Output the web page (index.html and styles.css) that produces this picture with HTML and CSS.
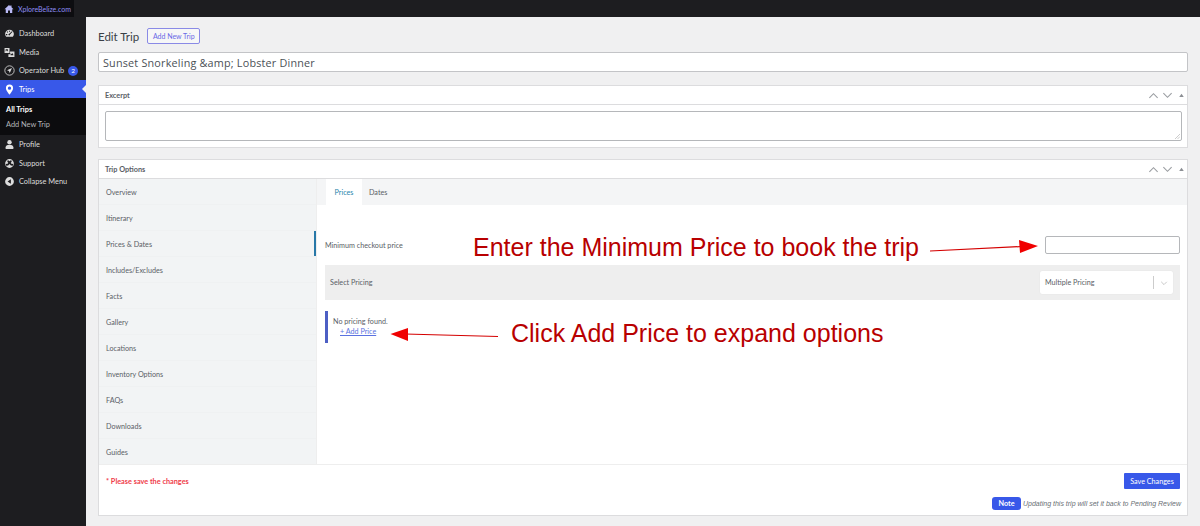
FILE: index.html
```html
<!DOCTYPE html>
<html lang="en">
<head>
<meta charset="utf-8">
<title>Edit Trip</title>
<link rel="stylesheet" href="styles.css">
</head>
<body>
<header class="adminbar">
  <div class="site">
    <svg class="site-icon" viewBox="0 0 20 20"><path d="M10 2 1 10.500h2.500V18H8v-5h4v5h4.500v-7.500H19l-4-3.800V3h-2.500v1.400z"/></svg>
    <span>XploreBelize.com</span>
  </div>
</header>
<div class="layout">
  <nav class="sidebar">
    <ul class="menu">
      <li class="item"><svg class="icon" viewBox="0 0 20 20"><path fill-rule="evenodd" d="M10 3a8 8 0 0 0-8 8c0 2 .7 3.800 2 5h12a8 8 0 0 0 2-5 8 8 0 0 0-8-8zM9 5h2v2H9zM5 7l1.500-1 1 1.500L6 8.500zm9.500-1 1 1L11 12a1.500 1.500 0 1 1-1.500-1.500zM3.500 11h2.500v2H3.500z"/></svg>Dashboard</li>
      <li class="item"><svg class="icon" viewBox="0 0 20 20"><path fill-rule="evenodd" d="M1 2h9v9H1zm2 2v4l2-2 2 2V4zM11 8h8v10H8v-5h3zm1 3v4h5v-1l-2-3-1.500 2z"/></svg>Media</li>
      <li class="item"><svg class="icon" viewBox="0 0 20 20"><circle cx="10" cy="10" r="8.500" fill="none" stroke="currentColor" stroke-width="1.500"/><path d="M14.500 5.500 5.500 9.500l3.500 1.500 1.500 3.500z"/></svg>Operator Hub<span class="badge">2</span></li>
      <li class="item current"><svg class="icon" viewBox="0 0 20 20"><path fill-rule="evenodd" d="M10 1a6.500 6.500 0 0 0-6.500 6.500C3.500 12 10 19 10 19s6.500-7 6.500-11.500A6.500 6.500 0 0 0 10 1zm0 3.500a3 3 0 1 1 0 6 3 3 0 0 1 0-6z"/></svg>Trips</li>
      <li class="submenu">
        <a class="sub active">All Trips</a>
        <a class="sub">Add New Trip</a>
      </li>
      <li class="item"><svg class="icon" viewBox="0 0 20 20"><circle cx="10" cy="6" r="4"/><path d="M3 18v-3c0-2 2-4 4-4h6c2 0 4 2 4 4v3z"/></svg>Profile</li>
      <li class="item"><svg class="icon" viewBox="0 0 20 20"><path fill-rule="evenodd" d="M10 2a8 8 0 1 0 0 16 8 8 0 0 0 0-16zM7 3.800 10 6l3-2.200 1 3.200-1.700 1.500L14 11l3-.5-1 3.500-3.500-.5L10 11l-2.500 2.500L4 14l-1-3.500 3 .5 1.700-2.500L6 7z"/></svg>Support</li>
      <li class="item"><svg class="icon" viewBox="0 0 20 20"><path fill-rule="evenodd" d="M10 2a8 8 0 1 0 0 16 8 8 0 0 0 0-16zm2.500 4v8l-6-4z"/></svg>Collapse Menu</li>
    </ul>
  </nav>
  <main class="main">
    <div class="page-head">
      <h1 class="page-title">Edit Trip</h1>
      <a class="add-new">Add New Trip</a>
    </div>
    <div class="title-input">Sunset Snorkeling &amp;amp; Lobster Dinner</div>

    <section class="box excerpt">
      <div class="box-head">
        <h2>Excerpt</h2>
        <div class="box-controls">
          <svg viewBox="0 0 12 12"><path d="M1.500 8.500 6 4l4.500 4.500"/></svg>
          <svg viewBox="0 0 12 12"><path d="M1.500 3.500 6 8l4.500-4.500"/></svg>
          <svg viewBox="0 0 12 12"><path class="solid" d="M3.500 7.500 6 4l2.500 3.500z"/></svg>
        </div>
      </div>
      <div class="excerpt-body">
        <div class="textarea"><svg class="grip" viewBox="0 0 6 6"><path d="M0 6l6-6M3 6l3-3"/></svg></div>
      </div>
    </section>

    <section class="box options">
      <div class="box-head">
        <h2>Trip Options</h2>
        <div class="box-controls">
          <svg viewBox="0 0 12 12"><path d="M1.500 8.500 6 4l4.500 4.500"/></svg>
          <svg viewBox="0 0 12 12"><path d="M1.500 3.500 6 8l4.500-4.500"/></svg>
          <svg viewBox="0 0 12 12"><path class="solid" d="M3.500 7.500 6 4l2.500 3.500z"/></svg>
        </div>
      </div>
      <div class="options-body">
        <ul class="side-tabs">
          <li>Overview</li>
          <li>Itinerary</li>
          <li class="selected">Prices &amp; Dates</li>
          <li>Includes/Excludes</li>
          <li>Facts</li>
          <li>Gallery</li>
          <li>Locations</li>
          <li>Inventory Options</li>
          <li>FAQs</li>
          <li>Downloads</li>
          <li>Guides</li>
        </ul>
        <div class="panel">
          <div class="tabs">
            <span class="tab on">Prices</span>
            <span class="tab">Dates</span>
          </div>
          <div class="panel-body">
            <div class="min-row">
              <label>Minimum checkout price</label>
              <div class="min-input"></div>
            </div>
            <div class="pricing-row">
              <span>Select Pricing</span>
              <div class="select">
                <span class="select-value">Multiple Pricing</span>
                <span class="select-arrow"><svg viewBox="0 0 10 10"><path d="M1.500 3.500 5 7l3.500-3.500"/></svg></span>
              </div>
            </div>
            <div class="notice">
              <p>No pricing found.</p>
              <a>+ Add Price</a>
            </div>
          </div>
        </div>
      </div>
      <div class="box-foot">
        <div class="foot-top">
          <span class="warn">* Please save the changes</span>
          <a class="save">Save Changes</a>
        </div>
        <div class="foot-note">
          <span class="note-tag">Note</span>
          <em>Updating this trip will set it back to Pending Review</em>
        </div>
      </div>
    </section>
  </main>
</div>

<div class="callout callout-one">Enter the Minimum Price to book the trip</div>
<div class="callout callout-two">Click Add Price to expand options</div>
<svg class="arrows" viewBox="0 0 1200 526">
  <path d="M930 251 1022 246.500" class="shaft"/>
  <path d="M1038 246 1019 240 1020 253z" class="head"/>
  <path d="M498 336.500 405 334" class="shaft"/>
  <path d="M390.500 334 408 328 408 341z" class="head"/>
</svg>
</body>
</html>
```

FILE: styles.css
```css
* { box-sizing: border-box; }
html, body { margin: 0; padding: 0; height: 100%; }
body {
  width: 1200px;
  height: 526px;
  overflow: hidden;
  position: relative;
  background: #f0f0f1;
  font-family: Lato, "Open Sans", sans-serif;
  font-size: 7.200px;
  color: #5a6066;
}
ul { list-style: none; margin: 0; padding: 0; }
h1, h2, p { margin: 0; font-weight: 400; }

.adminbar { height: 17px; background: #1d1d20; display: flex; }
.site {
  width: 74px;
  height: 17px;
  background: #0d0d10;
  display: flex;
  align-items: center;
  gap: 4px;
  padding-left: 4px;
  color: #8d8df5;
  font-size: 7px;
}
.site-icon { width: 10px; height: 10px; fill: #b9b9f5; }

.layout { display: flex; height: 509px; }
.sidebar { width: 86px; background: #1d1d20; padding-top: 7px; color: #dcdcdc; flex: none; }
.item {
  height: 18.500px;
  display: flex;
  align-items: center;
  padding: .5px 0 0 4px;
  font-size: 7.400px;
  position: relative;
}
.icon { width: 11px; height: 11px; fill: currentColor; margin-right: 4px; flex: none; color: #dcdcdc; }
.badge {
  width: 10px;
  height: 10px;
  border-radius: 50%;
  background: #3858e9;
  color: #fff;
  font-size: 6.500px;
  display: flex;
  align-items: center;
  justify-content: center;
  margin-left: 4px;
}
.current { background: #3858e9; color: #fff; }
.current .icon { color: #fff; }
.current::after {
  content: "";
  position: absolute;
  right: 0;
  top: 5px;
  border: 4px solid transparent;
  border-right-color: #f0f0f1;
  border-left: 0;
}
.submenu { background: #0c0c0e; height: 37px; padding-top: 4px; display: flex; flex-direction: column; }
.sub { height: 15px; display: flex; align-items: center; padding-left: 6px; color: #b4b4b8; font-size: 7.400px; }
.sub.active { color: #fff; font-weight: 700; }

.main { flex: 1; padding: 0 12px; min-width: 0; }
.page-head { display: flex; align-items: center; height: 35px; padding-top: 3px; gap: 8px; }
.page-title { font-size: 11.500px; color: #3a4046; }
.add-new {
  height: 16px;
  width: 53px;
  border: 1px solid #8a8ae6;
  border-radius: 2px;
  color: #6a6ae6;
  font-size: 7px;
  display: flex;
  align-items: center;
  justify-content: center;
  background: #f6f7f7;
}
.title-input {
  height: 20px;
  background: #fff;
  border: 1px solid #c3c4c7;
  border-radius: 2px;
  padding-left: 4px;
  display: flex;
  align-items: center;
  font-family: "Open Sans", sans-serif;
  font-size: 10.800px;
  color: #4a5056;
  letter-spacing: .2px;
}

.box { background: #fff; border: 1px solid #dcdcde; }
.excerpt { margin-top: 13px; height: 63px; }
.options { margin-top: 11px; height: 357px; display: flex; flex-direction: column; }
.box-head {
  height: 19px;
  border-bottom: 1px solid #dcdcde;
  display: flex;
  align-items: center;
  justify-content: space-between;
  padding: 0 0 0 6px;
  flex: none;
}
.box-head h2 { font-size: 7.300px; font-weight: 700; color: #5a6066; }
.box-controls { display: flex; gap: 3px; }
.box-controls svg { width: 11px; height: 11px; }
.box-controls path { fill: none; stroke: #9a9da1; stroke-width: 1.200; }
.box-controls .solid { fill: #8c8f94; stroke: none; }

.excerpt-body { padding: 6px 5px 0 6px; }
.textarea { height: 30px; border: 1px solid #b5b7ba; border-radius: 2px; position: relative; }
.grip { position: absolute; right: 1px; bottom: 1px; width: 5px; height: 5px; }
.grip path { stroke: #999; stroke-width: .6; fill: none; }

.options-body { display: flex; flex: none; height: 285px; }
.side-tabs { width: 217px; background: #f2f4f5; flex: none; }
.side-tabs li {
  height: 26px;
  display: flex;
  align-items: center;
  padding: 1px 0 0 7px;
  border-bottom: 1px solid #eff1f2;
  position: relative;
}
.side-tabs li:last-child { height: 25px; border-bottom: 0; }
.side-tabs .selected::after {
  content: "";
  position: absolute;
  right: 0;
  top: 0;
  bottom: 0;
  width: 2px;
  background: #2878a8;
}
.panel { flex: 1; min-width: 0; border-left: 1px solid #eee; }
.tabs { height: 26px; background: #f4f5f6; display: flex; padding-left: 9px; }
.tab { height: 26px; display: flex; align-items: center; padding: 1px 7px 0; }
.tab.on { background: #fff; color: #2a86ad; justify-content: center; padding: 1px 0 0; width: 36px; }
.panel-body { padding: 31px 7px 0 8px; }
.min-row { display: flex; align-items: center; justify-content: space-between; height: 18px; }
.min-input { width: 135px; height: 18px; border: 1px solid #b5b7ba; border-radius: 2px; background: #fff; }
.pricing-row {
  margin-top: 11px;
  height: 35px;
  background: #eee;
  display: flex;
  align-items: center;
  justify-content: space-between;
  padding: 0 7px 0 5px;
}
.select {
  width: 133px;
  height: 23px;
  background: #fff;
  border-radius: 2px;
  box-shadow: 0 0 1px #d5d5d5;
  display: flex;
  align-items: center;
  justify-content: space-between;
  padding-left: 5px;
}
.select-arrow {
  width: 20px;
  height: 13px;
  border-left: 1px solid #ccc;
  display: flex;
  align-items: center;
  justify-content: center;
}
.select-arrow svg { width: 8px; height: 8px; }
.select-arrow path { fill: none; stroke: #bbb; stroke-width: 1; }
.notice {
  margin-top: 11px;
  height: 32px;
  border-left: 3px solid #4d5fc4;
  padding: 6px 0 0 5px;
  line-height: 10px;
}
.notice a { display: block; margin-left: 7px; color: #5a72e0; text-decoration: underline; }

.box-foot { flex: 1; border-top: 1px solid #eee; padding: 8px 7px 0 7px; }
.foot-top { display: flex; align-items: center; justify-content: space-between; }
.warn { color: #ef3b4a; font-weight: 700; font-size: 7.300px; }
.save {
  width: 56px;
  height: 16px;
  background: #3858e9;
  color: #fff;
  border-radius: 1px;
  display: flex;
  align-items: center;
  justify-content: center;
}
.foot-note { display: flex; justify-content: flex-end; align-items: center; gap: 2px; margin-top: 8px; margin-right: -1px; }
.foot-note em { font-family: "Liberation Sans", sans-serif; font-size: 7px; color: #6a6f75; }
.note-tag {
  width: 29px;
  height: 13px;
  background: #3858e9;
  color: #fff;
  font-weight: 700;
  border-radius: 3px;
  display: flex;
  align-items: center;
  justify-content: center;
}

.callout {
  position: absolute;
  font-family: "Liberation Sans", sans-serif;
  color: #b80000;
  white-space: nowrap;
  line-height: 1;
}
.callout-one { left: 473px; top: 235px; font-size: 25px; }
.callout-two { left: 511px; top: 321px; font-size: 25px; }
.arrows { position: absolute; left: 0; top: 0; width: 1200px; height: 526px; pointer-events: none; }
.shaft { stroke: #d40000; stroke-width: 1.200; fill: none; }
.head { fill: #f00000; }
```
